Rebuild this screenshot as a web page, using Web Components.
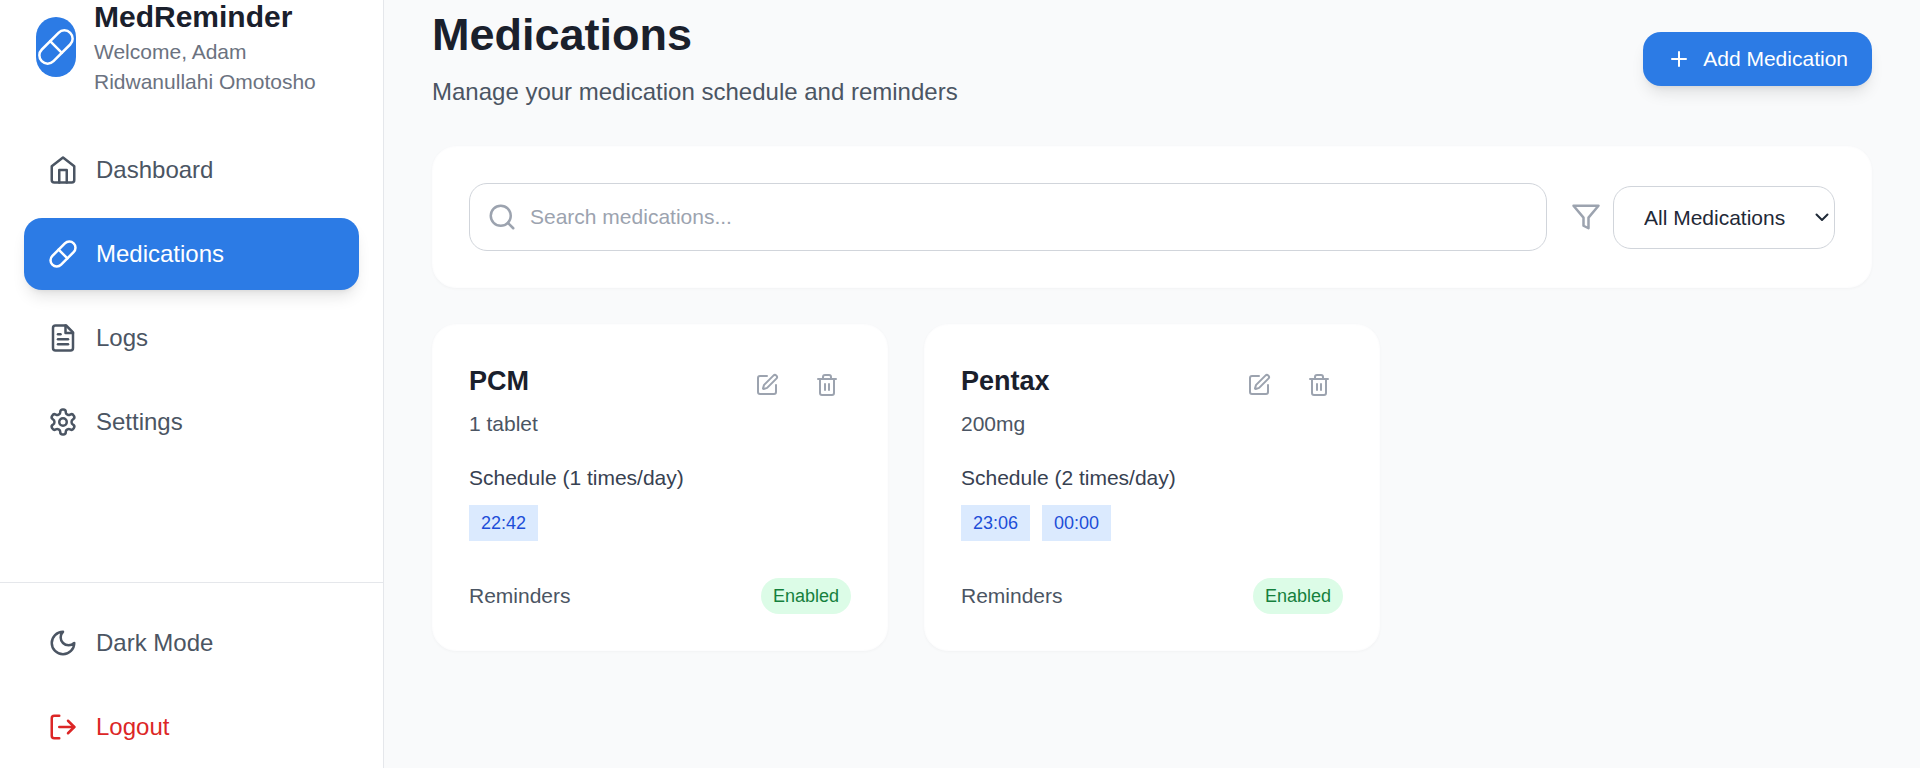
<!DOCTYPE html>
<html lang="en">
<head>
<meta charset="utf-8">
<title>MedReminder</title>
<style>
  html, body { margin: 0; height: 100%; overflow: hidden; }
  body { font-family: "Liberation Sans", Arial, sans-serif; background: #f9fafb; color: #1a202c; }
</style>
</head>
<body>
<med-app></med-app>
<script>
const ICONS = {
  pill: '<path d="m10.5 20.5 10-10a4.95 4.95 0 1 0-7-7l-10 10a4.95 4.95 0 1 0 7 7Z"/><path d="m8.5 8.5 7 7"/>',
  home: '<path d="m3 9 9-7 9 7v11a2 2 0 0 1-2 2H5a2 2 0 0 1-2-2z"/><polyline points="9 22 9 12 15 12 15 22"/>',
  file: '<path d="M14.5 2H6a2 2 0 0 0-2 2v16a2 2 0 0 0 2 2h12a2 2 0 0 0 2-2V7.5L14.5 2z"/><polyline points="14 2 14 8 20 8"/><line x1="16" y1="13" x2="8" y2="13"/><line x1="16" y1="17" x2="8" y2="17"/><line x1="10" y1="9" x2="8" y2="9"/>',
  settings: '<path d="M12.22 2h-.44a2 2 0 0 0-2 2v.18a2 2 0 0 1-1 1.73l-.43.25a2 2 0 0 1-2 0l-.15-.08a2 2 0 0 0-2.73.73l-.22.38a2 2 0 0 0 .73 2.73l.15.1a2 2 0 0 1 1 1.72v.51a2 2 0 0 1-1 1.74l-.15.09a2 2 0 0 0-.73 2.73l.22.38a2 2 0 0 0 2.73.73l.15-.08a2 2 0 0 1 2 0l.43.25a2 2 0 0 1 1 1.73V20a2 2 0 0 0 2 2h.44a2 2 0 0 0 2-2v-.18a2 2 0 0 1 1-1.73l.43-.25a2 2 0 0 1 2 0l.15.08a2 2 0 0 0 2.73-.73l.22-.39a2 2 0 0 0-.73-2.73l-.15-.08a2 2 0 0 1-1-1.74v-.5a2 2 0 0 1 1-1.74l.15-.09a2 2 0 0 0 .73-2.73l-.22-.38a2 2 0 0 0-2.73-.73l-.15.08a2 2 0 0 1-2 0l-.43-.25a2 2 0 0 1-1-1.73V4a2 2 0 0 0-2-2z"/><circle cx="12" cy="12" r="3"/>',
  moon: '<path d="M12 3a6 6 0 0 0 9 9 9 9 0 1 1-9-9Z"/>',
  logout: '<path d="M9 21H5a2 2 0 0 1-2-2V5a2 2 0 0 1 2-2h4"/><polyline points="16 17 21 12 16 7"/><line x1="21" y1="12" x2="9" y2="12"/>',
  search: '<circle cx="11" cy="11" r="8"/><path d="m21 21-4.3-4.3"/>',
  filter: '<polygon points="22 3 2 3 10 12.46 10 19 14 21 14 12.46 22 3"/>',
  plus: '<path d="M5 12h14"/><path d="M12 5v14"/>',
  edit: '<path d="M12 3H5a2 2 0 0 0-2 2v14a2 2 0 0 0 2 2h14a2 2 0 0 0 2-2v-7"/><path d="M18.375 2.625a1 1 0 0 1 3 3l-9.013 9.014a2 2 0 0 1-.853.505l-2.873.84a.5.5 0 0 1-.62-.62l.84-2.873a2 2 0 0 1 .506-.852z"/>',
  trash: '<path d="M3 6h18"/><path d="M19 6v14c0 1-1 2-2 2H7c-1 0-2-1-2-2V6"/><path d="M8 6V4c0-1 1-2 2-2h4c1 0 2 1 2 2v2"/><line x1="10" y1="11" x2="10" y2="17"/><line x1="14" y1="11" x2="14" y2="17"/>'
};

const BLUE = '#2c7be5';

function icon(name, size, stroke = 2) {
  return `<svg width="${size}" height="${size}" viewBox="0 0 24 24" fill="none" stroke="currentColor" stroke-width="${stroke}" stroke-linecap="round" stroke-linejoin="round" style="display:block;flex:none">${ICONS[name]}</svg>`;
}

class NavItem extends HTMLElement {
  connectedCallback() {
    this.attachShadow({ mode: 'open' });
    this.shadowRoot.innerHTML = `
      <style>
        :host { display: block; }
        a {
          display: flex;
          align-items: center;
          gap: 18px;
          height: 72px;
          box-sizing: border-box;
          padding: 0 24px;
          border-radius: 18px;
          font-size: 24px;
          color: #4b5563;
          text-decoration: none;
        }
        :host([active]) a {
          background: ${BLUE};
          color: #fff;
          box-shadow: 0 10px 15px -3px rgba(0,0,0,.1), 0 4px 6px -4px rgba(0,0,0,.1);
        }
        :host([danger]) a { color: #dc2626; }
      </style>
      <a href="#">${icon(this.getAttribute('icon'), 30)}<slot></slot></a>
    `;
  }
}

class MedSidebar extends HTMLElement {
  connectedCallback() {
    this.attachShadow({ mode: 'open' });
    this.shadowRoot.innerHTML = `
      <style>
        :host {
          display: flex;
          flex-direction: column;
          flex: none;
          width: 384px;
          height: 768px;
          box-sizing: border-box;
          background: #fff;
          border-right: 1px solid #e5e7eb;
        }
        .brand {
          display: flex;
          align-items: center;
          gap: 18px;
          margin-top: -3px;
          padding: 0 36px;
        }
        .logo {
          display: flex;
          align-items: center;
          justify-content: center;
          flex: none;
          width: 40px;
          height: 60px;
          border-radius: 20px;
          background: ${BLUE};
          color: #fff;
        }
        h1 { margin: 0; font-size: 30px; line-height: 40px; font-weight: 700; color: #1a202c; }
        p { margin: 0; font-size: 21px; line-height: 30px; color: #6b7280; }
        nav {
          flex: 1;
          display: flex;
          flex-direction: column;
          gap: 12px;
          padding: 37px 24px 0;
        }
        footer {
          display: flex;
          flex-direction: column;
          gap: 12px;
          padding: 24px 24px 5px;
          border-top: 1px solid #e5e7eb;
        }
      </style>
      <div class="brand">
        <div class="logo">${icon('pill', 40, 1.5)}</div>
        <div>
          <h1>MedReminder</h1>
          <p>Welcome, Adam Ridwanullahi Omotosho</p>
        </div>
      </div>
      <nav>
        <nav-item icon="home">Dashboard</nav-item>
        <nav-item icon="pill" active>Medications</nav-item>
        <nav-item icon="file">Logs</nav-item>
        <nav-item icon="settings">Settings</nav-item>
      </nav>
      <footer>
        <nav-item icon="moon">Dark Mode</nav-item>
        <nav-item icon="logout" danger>Logout</nav-item>
      </footer>
    `;
  }
}

class PageHeader extends HTMLElement {
  connectedCallback() {
    this.attachShadow({ mode: 'open' });
    this.shadowRoot.innerHTML = `
      <style>
        :host {
          display: flex;
          align-items: flex-start;
          justify-content: space-between;
          margin-bottom: 37px;
        }
        h2 { margin: 0 0 15px; font-size: 45px; line-height: 50px; font-weight: 700; color: #1a202c; }
        p { margin: 0; font-size: 24px; line-height: 34px; color: #4b5563; }
        button {
          display: flex;
          align-items: center;
          gap: 12px;
          height: 54px;
          margin-top: 22px;
          padding: 0 24px;
          border: 0;
          border-radius: 18px;
          background: ${BLUE};
          color: #fff;
          font: 21px "Liberation Sans", Arial, sans-serif;
          box-shadow: 0 10px 15px -3px rgba(0,0,0,.1), 0 4px 6px -4px rgba(0,0,0,.1);
        }
      </style>
      <div>
        <h2>Medications</h2>
        <p>Manage your medication schedule and reminders</p>
      </div>
      <button>${icon('plus', 24)}Add Medication</button>
    `;
  }
}

class SearchPanel extends HTMLElement {
  connectedCallback() {
    this.attachShadow({ mode: 'open' });
    this.shadowRoot.innerHTML = `
      <style>
        :host {
          display: flex;
          align-items: center;
          gap: 24px;
          padding: 36px;
          margin-bottom: 36px;
          background: #fff;
          border: 1px solid #fdfdfe;
          border-radius: 24px;
          box-shadow: 0 1px 3px rgba(0,0,0,.03);
        }
        .search {
          flex: 1;
          display: flex;
          align-items: center;
          gap: 13px;
          height: 68px;
          box-sizing: border-box;
          padding: 0 17px;
          border: 1px solid #d1d5db;
          border-radius: 18px;
          color: #9ca3af;
        }
        input {
          flex: 1;
          border: 0;
          outline: 0;
          padding: 0;
          background: none;
          font: 21px "Liberation Sans", Arial, sans-serif;
        }
        input::placeholder { color: #9ca3af; opacity: 1; }
        .filter { display: flex; align-items: center; gap: 12px; color: #9ca3af; }
        .select { position: relative; }
        select {
          display: block;
          width: 222px;
          height: 63px;
          box-sizing: border-box;
          padding: 0 30px;
          appearance: none;
          background: #fff;
          border: 1px solid #d1d5db;
          border-radius: 18px;
          color: #1f2937;
          font: 21px "Liberation Sans", Arial, sans-serif;
        }
        .chevron { position: absolute; right: 6px; top: 27px; color: #1f2937; pointer-events: none; }
      </style>
      <label class="search">
        ${icon('search', 30)}
        <input type="text" placeholder="Search medications...">
      </label>
      <div class="filter">
        ${icon('filter', 30)}
        <div class="select">
          <select><option>All Medications</option></select>
          <svg class="chevron" width="14" height="9" viewBox="0 0 14 9" fill="none" stroke="currentColor" stroke-width="2" stroke-linecap="round" stroke-linejoin="round"><path d="M1.5 1.5 7 7l5.5-5.5"/></svg>
        </div>
      </div>
    `;
  }
}

class MedCard extends HTMLElement {
  connectedCallback() {
    const times = this.getAttribute('times').split(',');
    this.attachShadow({ mode: 'open' });
    this.shadowRoot.innerHTML = `
      <style>
        :host {
          display: block;
          padding: 36px;
          background: #fff;
          border: 1px solid #fdfdfe;
          border-radius: 24px;
          box-shadow: 0 1px 3px rgba(0,0,0,.03);
        }
        .top { display: flex; justify-content: space-between; align-items: flex-start; margin-bottom: 23px; }
        h3 { margin: 0 0 6px; font-size: 27px; line-height: 40.5px; font-weight: 700; color: #1a202c; }
        .dose { font-size: 21px; line-height: 31px; color: #4b5563; }
        .actions { display: flex; gap: 12px; }
        button {
          padding: 12px;
          border: 0;
          background: none;
          color: #9ca3af;
        }
        .label { font-size: 21px; line-height: 31px; color: #374151; margin-bottom: 12px; }
        .times { display: flex; gap: 12px; margin-bottom: 37px; }
        .time { padding: 0 12px; font-size: 18px; line-height: 36px; background: #dbeafe; color: #1d4ed8; }
        .row { display: flex; align-items: center; justify-content: space-between; }
        .row span:first-child { font-size: 21px; color: #4b5563; }
        .pill { padding: 0 12px; font-size: 18px; line-height: 36px; border-radius: 18px; background: #dcfce7; color: #15803d; }
      </style>
      <div class="top">
        <div>
          <h3>${this.getAttribute('name')}</h3>
          <div class="dose">${this.getAttribute('dose')}</div>
        </div>
        <div class="actions">
          <button>${icon('edit', 24)}</button>
          <button>${icon('trash', 24)}</button>
        </div>
      </div>
      <div class="label">Schedule (${times.length} times/day)</div>
      <div class="times">${times.map(t => `<span class="time">${t}</span>`).join('')}</div>
      <div class="row"><span>Reminders</span><span class="pill">Enabled</span></div>
    `;
  }
}

class MedApp extends HTMLElement {
  connectedCallback() {
    this.attachShadow({ mode: 'open' });
    this.shadowRoot.innerHTML = `
      <style>
        :host { display: flex; height: 768px; overflow: hidden; }
        main { flex: 1; min-width: 0; padding: 10px 48px 0; }
        .grid { display: grid; grid-template-columns: repeat(3, 1fr); gap: 36px; align-items: start; }
      </style>
      <med-sidebar></med-sidebar>
      <main>
        <page-header></page-header>
        <search-panel></search-panel>
        <div class="grid">
          <med-card name="PCM" dose="1 tablet" times="22:42"></med-card>
          <med-card name="Pentax" dose="200mg" times="23:06,00:00"></med-card>
        </div>
      </main>
    `;
  }
}

customElements.define('nav-item', NavItem);
customElements.define('med-sidebar', MedSidebar);
customElements.define('page-header', PageHeader);
customElements.define('search-panel', SearchPanel);
customElements.define('med-card', MedCard);
customElements.define('med-app', MedApp);
</script>
</body>
</html>
